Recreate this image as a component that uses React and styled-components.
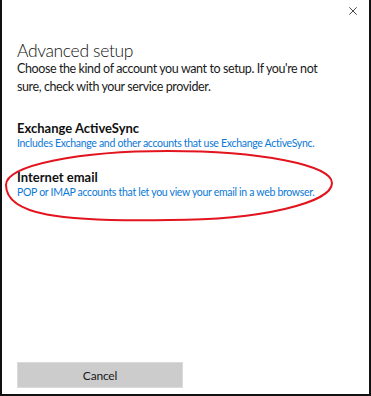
import React from "react";
import styled, { createGlobalStyle } from "styled-components";

const Global = createGlobalStyle`
  html, body { margin: 0; padding: 0; background: #fff; }
  body { font-family: Lato, "Noto Sans", sans-serif; }
`;

const Dialog = styled.div`
  position: relative;
  box-sizing: border-box;
  width: 371px;
  height: 396px;
  background: #fff;
  border-left: 2px solid #111;
  border-right: 2px solid #111;
  border-bottom: 2px solid #111;
  display: flex;
  flex-direction: column;
  padding: 0 0 6px 15px;
`;

const TitleBar = styled.div`
  height: 41px;
  display: flex;
  justify-content: flex-end;
  align-items: flex-start;
`;

const CloseButton = styled.button`
  border: none;
  background: transparent;
  width: 30px;
  height: 22px;
  padding: 0;
  margin-right: 1px;
  display: flex;
  align-items: center;
  justify-content: center;
  cursor: pointer;
`;

const Title = styled.h1`
  margin: 0;
  font-size: 17.5px;
  font-weight: 300;
  letter-spacing: -0.35px;
  color: #111;
  line-height: 20px;
`;

const Intro = styled.p`
  margin: -1px 0 0;
  font-size: 12.5px;
  letter-spacing: -0.4px;
  line-height: 17.5px;
  color: #1a1a1a;
  padding-right: 30px;
`;

const OptionList = styled.div`
  margin-top: 24.5px;
  display: flex;
  flex-direction: column;
  gap: 18px;
`;

const Option = styled.div`
  display: flex;
  flex-direction: column;
`;

const OptionTitle = styled.div`
  font-size: 13px;
  font-weight: 700;
  color: #111;
  line-height: 16px;
`;

const OptionDesc = styled.div`
  font-size: 10.5px;
  letter-spacing: -0.3px;
  color: #0a78d7;
  line-height: 15px;
  white-space: nowrap;
`;

const Highlight = styled.svg`
  position: absolute;
  left: -2px;
  top: 0;
  pointer-events: none;
`;

const Spacer = styled.div`
  flex: 1;
`;

const CancelButton = styled.button`
  box-sizing: border-box;
  width: 166px;
  height: 26px;
  border: 1px solid #dadada;
  background: #cccccc;
  font-family: Lato, "Noto Sans", sans-serif;
  font-size: 12px;
  letter-spacing: -0.2px;
  color: #1a1a1a;
  padding: 0;
  cursor: pointer;
`;

export default function App() {
  return (
    <>
      <Global />
      <Dialog>
        <TitleBar>
          <CloseButton aria-label="Close">
            <svg width="8" height="8" viewBox="0 0 8 8">
              <path d="M0.3 0.3 L7.7 7.7 M7.7 0.3 L0.3 7.7" stroke="#333" strokeWidth="0.9" />
            </svg>
          </CloseButton>
        </TitleBar>
        <Title>Advanced setup</Title>
        <Intro>
          Choose the kind of account you want to setup. If you're not sure, check with your service provider.
        </Intro>
        <OptionList>
          <Option>
            <OptionTitle>Exchange ActiveSync</OptionTitle>
            <OptionDesc>Includes Exchange and other accounts that use Exchange ActiveSync.</OptionDesc>
          </Option>
          <Option>
            <OptionTitle>Internet email</OptionTitle>
            <OptionDesc>POP or IMAP accounts that let you view your email in a web browser.</OptionDesc>
          </Option>
        </OptionList>
        <Spacer />
        <CancelButton>Cancel</CancelButton>
        <Highlight width="371" height="396" viewBox="0 0 371 396">
          <path
            d="M6 185 C6 165 80 151 168 151 C260 151 332 165 332 183 C332 203 260 220 170 220 C60 222 6 215 6 185 Z"
            fill="none"
            stroke="#e2141e"
            strokeWidth="2"
          />
        </Highlight>
      </Dialog>
    </>
  );
}
